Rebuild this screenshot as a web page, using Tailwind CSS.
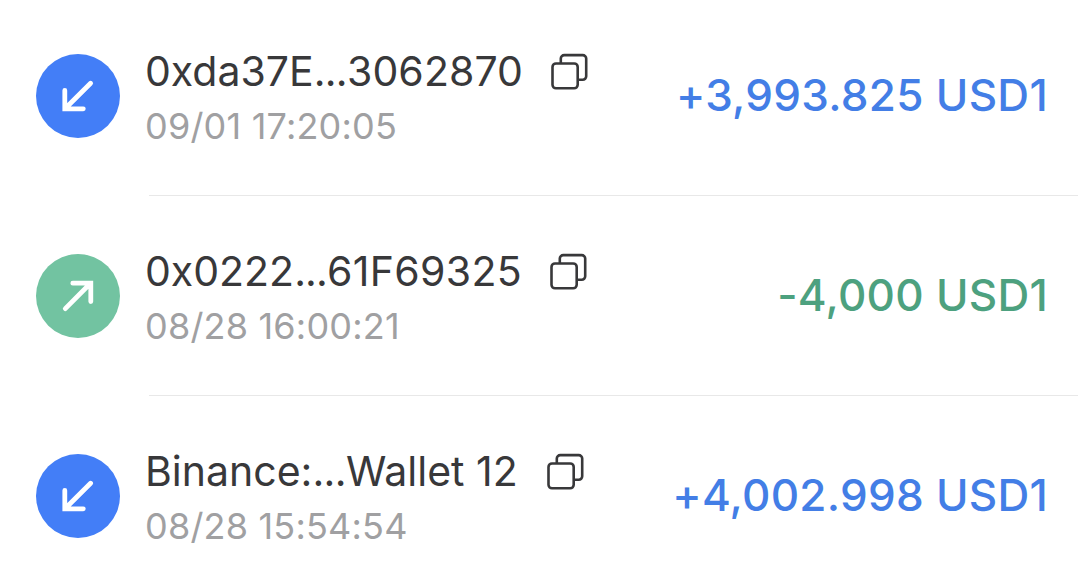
<!DOCTYPE html>
<html lang="en">
<head>
  <meta charset="UTF-8" />
  <meta name="viewport" content="width=device-width, initial-scale=1.0"/>
  <title>Transactions</title>
  <script src="https://cdn.jsdelivr.net/npm/@tailwindcss/browser@4"></script>
</head>
<body class="bg-white font-['Inter',sans-serif] overflow-hidden">

  <!-- shared icons -->
  <svg class="hidden">
    <symbol id="in" viewBox="0 0 84 84"><path d="M54.600 29.200 29.500 54.300M28.800 36.500V54.800H47.300" fill="none" stroke="#fff" stroke-width="4.800" stroke-linecap="round" stroke-linejoin="miter"/></symbol>
    <symbol id="out" viewBox="0 0 84 84"><path d="M29.300 54.600 54.300 29.500M36.800 29.200H54.800V47.500" fill="none" stroke="#fff" stroke-width="4.800" stroke-linecap="round" stroke-linejoin="miter"/></symbol>
    <symbol id="copy" viewBox="0 0 40 40"><g fill="none" stroke="#38383a" stroke-width="2.600"><rect x="2.500" y="11.500" width="25.200" height="24.800" rx="3.500"/><path d="M10.800 11.400V6.600a3.500 3.500 0 0 1 3.500-3.500h18.400a3.500 3.500 0 0 1 3.500 3.500v17.700a3.500 3.500 0 0 1-3.500 3.500h-5"/></g></symbol>
  </svg>

  <ul class="-mt-1">
    <li class="flex flex-col h-[200px]">
      <div class="flex grow items-center pt-px pl-9 pr-[30px]">
        <svg class="size-[84px] shrink-0 rounded-full bg-[#437ef7]"><use href="#in"/></svg>
        <div class="ml-[25px] mt-[11px] grow">
          <div class="flex items-center">
            <span class="text-[41px] leading-[50px] -mt-0.5 text-[#38383a] whitespace-nowrap">0xda37E<span class="tracking-[-0.7px]">...</span><span class="tracking-[0.1px]">3062870</span></span>
            <svg class="ml-[27px] size-10"><use href="#copy"/></svg>
          </div>
          <div class="text-[36px] leading-[60px] tracking-[0.2px] text-[#a0a0a2] whitespace-nowrap">09/01 17:20:05</div>
        </div>
        <span class="-mt-0.5 text-[44px] font-medium tracking-[0.3px] text-[#437ee6] whitespace-nowrap">+3,993.825 USD1</span>
      </div>
      <div class="h-px ml-[149px] bg-[#e8e8e8]"></div>
    </li>
    <li class="flex flex-col h-[200px]">
      <div class="flex grow items-center pt-px pl-9 pr-[30px]">
        <svg class="size-[84px] shrink-0 rounded-full bg-[#72c3a1]"><use href="#out"/></svg>
        <div class="ml-[25px] mt-[11px] grow">
          <div class="flex items-center">
            <span class="text-[41px] leading-[50px] -mt-0.5 text-[#38383a] whitespace-nowrap">0x0222<span class="tracking-[-0.9px]">...</span><span class="tracking-[0.35px]">61F69325</span></span>
            <svg class="ml-[27px] size-10"><use href="#copy"/></svg>
          </div>
          <div class="text-[36px] leading-[60px] tracking-[0.2px] text-[#a0a0a2] whitespace-nowrap">08/28 16:00:21</div>
        </div>
        <span class="-mt-0.5 text-[44px] font-medium tracking-[0.27px] text-[#4da17f] whitespace-nowrap">-4,000 USD1</span>
      </div>
      <div class="h-px ml-[149px] bg-[#e8e8e8]"></div>
    </li>
    <li class="flex flex-col h-[200px]">
      <div class="flex grow items-center pl-9 pr-[30px]">
        <svg class="size-[84px] shrink-0 rounded-full bg-[#437ef7]"><use href="#in"/></svg>
        <div class="ml-[25px] mt-[11px] grow">
          <div class="flex items-center">
            <span class="text-[41px] leading-[50px] -mt-0.5 text-[#38383a] whitespace-nowrap">Binance:<span class="tracking-[-0.6px]">...</span>Wallet 12</span>
            <svg class="ml-7 size-10"><use href="#copy"/></svg>
          </div>
          <div class="text-[36px] leading-[60px] tracking-[0.2px] text-[#a0a0a2] whitespace-nowrap">08/28 15:54:54</div>
        </div>
        <span class="-mt-0.5 text-[44px] font-medium tracking-[0.27px] text-[#437ee6] whitespace-nowrap">+4,002.998 USD1</span>
      </div>
    </li>
  </ul>

</body>
</html>
